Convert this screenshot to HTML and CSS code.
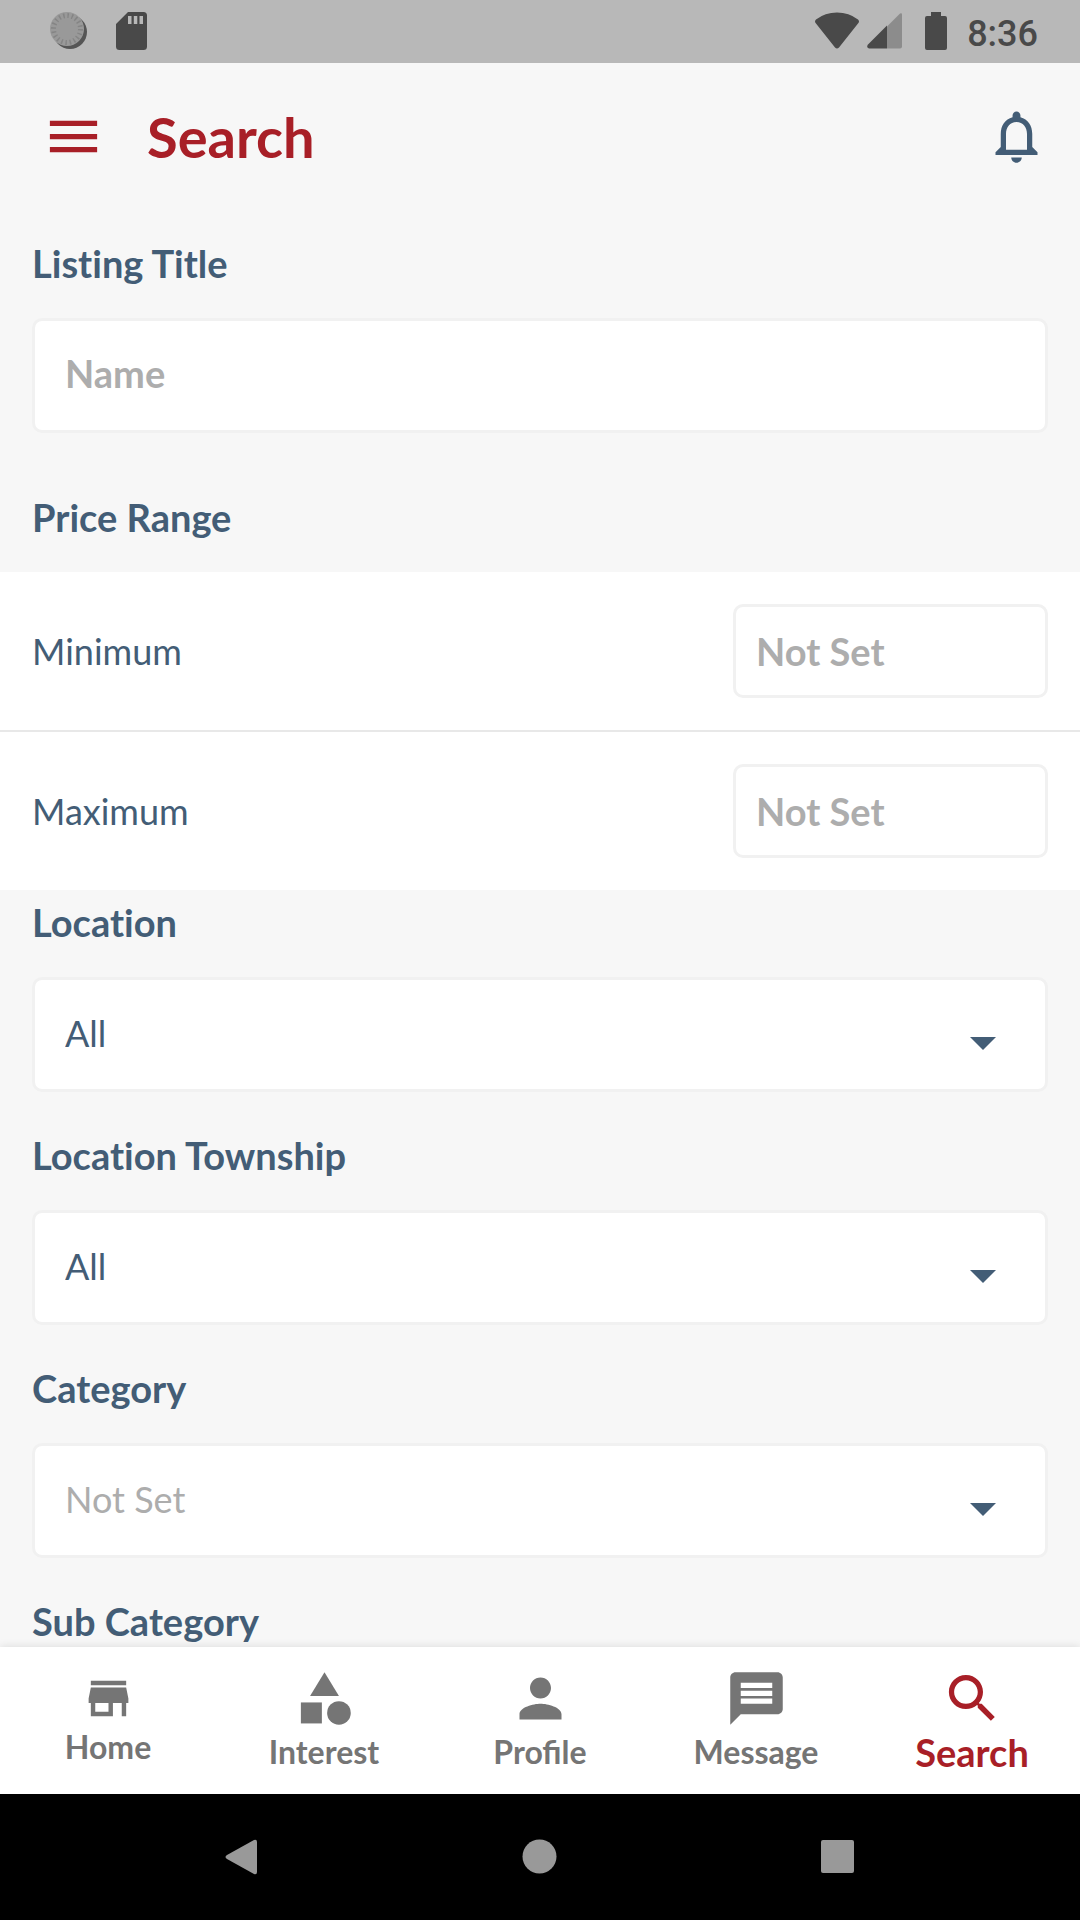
FILE: index.html
```html
<!DOCTYPE html>
<html lang="en">
<head>
<meta charset="utf-8">
<meta name="viewport" content="width=device-width, initial-scale=1">
<title>Search</title>
<link rel="stylesheet" href="styles.css">
</head>
<body>
<div class="app">
  <div class="status-bar">
    <div class="status-left">
      <svg class="status-sync" viewBox="0 0 38 38" aria-hidden="true">
        <circle cx="20" cy="20" r="17" fill="#555"/>
        <circle cx="17" cy="17" r="17" fill="#999"/>
        <circle cx="17" cy="17" r="13.500" fill="none" stroke="#858585" stroke-width="5" stroke-dasharray="1.500 2.740"/>
      </svg>
      <svg class="status-sd" viewBox="0 0 31 38" aria-hidden="true">
        <path fill="#494949" fill-rule="evenodd" d="M12 0h15.500Q31 0 31 3.500v31Q31 38 27.500 38h-24Q0 38 0 34.500V12zM12 4v8h3.500V4zm5.800 0v8h3.500V4zm5.700 0v8H27V4z"/>
      </svg>
    </div>
    <div class="status-right">
      <svg class="status-wifi" viewBox="0 0 44 37" aria-hidden="true">
        <path fill="#494949" d="M1 7Q10 0 22 0t21 7q2 2 0 4L24 35q-2 2-4 0L1 11q-2-2 0-4z"/>
      </svg>
      <svg class="status-signal" viewBox="0 0 35 37" aria-hidden="true">
        <path fill="#8c8c8c" d="M20 14 33 1q2-1 2 1v32q0 2-2 2H20z"/>
        <path fill="#494949" d="M20 13v23H2q-3-1-1-4z"/>
      </svg>
      <svg class="status-battery" viewBox="0 0 22 38" aria-hidden="true">
        <path fill="#494949" d="M6 0h10v4h4q2 0 2 2v30q0 2-2 2H2q-2 0-2-2V6q0-2 2-2h4z"/>
      </svg>
      <span class="clock">8:36</span>
    </div>
  </div>

  <header class="app-bar">
    <button class="icon-button" type="button" aria-label="Menu">
      <svg class="icon" viewBox="0 0 24 24"><path d="M3 18h18v-2H3v2zm0-5h18v-2H3v2zm0-7v2h18V6H3z"/></svg>
    </button>
    <h1 class="app-title">Search</h1>
    <button class="icon-button alerts" type="button" aria-label="Notifications">
      <svg class="icon" viewBox="0 0 24 24"><path d="M12 22c1.100 0 2-.9 2-2h-4c0 1.100.9 2 2 2zm6-6v-5c0-3.070-1.630-5.640-4.500-6.320V4c0-.83-.67-1.500-1.500-1.500s-1.500.67-1.500 1.500v.68C7.640 5.360 6 7.920 6 11v5l-2 2v1h16v-1l-2-2zm-2 1H8v-6c0-2.480 1.510-4.500 4-4.500s4 2.020 4 4.500v6z"/></svg>
    </button>
  </header>

  <main class="content">
    <form class="search-form">
      <div class="field field-first">
        <label class="field-label" for="listing-title">Listing Title</label>
        <input class="control" id="listing-title" type="text" placeholder="Name">
      </div>

      <fieldset class="price">
        <legend class="field-label price-title">Price Range</legend>
        <div class="price-row">
          <label class="price-label" for="price-min">Minimum</label>
          <input class="control price-input" id="price-min" type="text" inputmode="numeric" placeholder="Not Set">
        </div>
        <div class="price-row">
          <label class="price-label" for="price-max">Maximum</label>
          <input class="control price-input" id="price-max" type="text" inputmode="numeric" placeholder="Not Set">
        </div>
      </fieldset>

      <div class="field">
        <label class="field-label" for="location">Location</label>
        <div class="select-box">
          <select class="control" id="location"><option>All</option></select>
        </div>
      </div>
      <div class="field">
        <label class="field-label" for="township">Location Township</label>
        <div class="select-box">
          <select class="control" id="township"><option>All</option></select>
        </div>
      </div>
      <div class="field">
        <label class="field-label" for="category">Category</label>
        <div class="select-box">
          <select class="control unset" id="category"><option>Not Set</option></select>
        </div>
      </div>
      <div class="field">
        <label class="field-label" for="sub-category">Sub Category</label>
        <div class="select-box">
          <select class="control unset" id="sub-category"><option>Not Set</option></select>
        </div>
      </div>
    </form>
  </main>

  <nav class="tabs" aria-label="Main">
    <a class="tab" href="#home">
      <svg class="icon icon-small" viewBox="0 0 24 24" aria-hidden="true"><path d="M20 4H4v2h16V4zm1 10v-2l-1-5H4l-1 5v2h1v6h10v-6h4v6h2v-6h1zm-9 4H6v-4h6v4z"/></svg>
      <span>Home</span>
    </a>
    <a class="tab" href="#interest">
      <svg class="icon" viewBox="0 0 24 24" aria-hidden="true"><path d="M12 2l-5.500 9h11z"/><circle cx="17.500" cy="17.500" r="4.500"/><path d="M3 13.500h8v8H3z"/></svg>
      <span>Interest</span>
    </a>
    <a class="tab" href="#profile">
      <svg class="icon" viewBox="0 0 24 24" aria-hidden="true"><path d="M12 12c2.210 0 4-1.790 4-4s-1.790-4-4-4-4 1.790-4 4 1.790 4 4 4zm0 2c-2.670 0-8 1.340-8 4v2h16v-2c0-2.660-5.330-4-8-4z"/></svg>
      <span>Profile</span>
    </a>
    <a class="tab" href="#message">
      <svg class="icon" viewBox="0 0 24 24" aria-hidden="true"><path fill-rule="evenodd" d="M20 2H4c-1.100 0-2 .9-2 2v18l4-4h14c1.100 0 2-.9 2-2V4c0-1.100-.9-2-2-2zM6 6h12v2H6zm0 3h12v2H6zm0 3h12v2H6z"/></svg>
      <span>Message</span>
    </a>
    <a class="tab tab-active" href="#search" aria-current="page">
      <svg class="icon" viewBox="0 0 24 24" aria-hidden="true"><path d="M15.500 14h-.79l-.28-.27C15.410 12.590 16 11.110 16 9.500 16 5.910 13.090 3 9.500 3S3 5.910 3 9.500 5.910 16 9.500 16c1.610 0 3.090-.59 4.230-1.570l.27.28v.79l5 4.990L20.490 19l-4.990-5zm-6 0C7.010 14 5 11.990 5 9.500S7.010 5 9.500 5 14 7.010 14 9.500 11.990 14 9.500 14z"/></svg>
      <span>Search</span>
    </a>
  </nav>

  <div class="system-nav">
    <button class="system-button" type="button" aria-label="Back">
      <svg class="system-icon" viewBox="0 0 36 36"><path d="M3 16 30 1q3-1 3 2v30q0 3-3 2L3 20q-3-2 0-4z"/></svg>
    </button>
    <button class="system-button" type="button" aria-label="Home">
      <svg class="system-icon" viewBox="0 0 36 36"><circle cx="17.500" cy="17.500" r="17"/></svg>
    </button>
    <button class="system-button" type="button" aria-label="Recent apps">
      <svg class="system-icon" viewBox="0 0 36 36"><rect x="1" y="1" width="33" height="33" rx="2"/></svg>
    </button>
  </div>
</div>
</body>
</html>
```
FILE: styles.css
```css
:root {
  --ink: #435d76;
  --accent: #a81f27;
  --muted: #adadad;
  --surface: #f7f7f7;
  --line: #f1f1f1;
}

* {
  box-sizing: border-box;
}

body {
  margin: 0;
  background: var(--surface);
  color: var(--ink);
  font-family: Lato, "Liberation Sans", sans-serif;
  font-size: 36px;
}

button {
  padding: 0;
  border: 0;
  background: none;
  color: inherit;
}

.app {
  display: flex;
  flex-direction: column;
  height: 100vh;
}

/* Device status bar */
.status-bar {
  display: flex;
  justify-content: space-between;
  flex: none;
  height: 63px;
  padding: 12px 42px 0 50px;
  background: #b8b8b8;
}

.status-left,
.status-right {
  display: flex;
  align-items: flex-start;
}

.status-left {
  gap: 28px;
}

.status-sync {
  width: 38px;
  height: 38px;
}

.status-sd {
  width: 31px;
  height: 38px;
}

.status-wifi {
  width: 44px;
  height: 38px;
  margin-right: 8px;
}

.status-signal {
  width: 35px;
  height: 38px;
  margin-right: 23px;
}

.status-battery {
  width: 22px;
  height: 38px;
  margin-right: 20px;
}

.clock {
  color: #494949;
  font-family: Roboto, sans-serif;
  font-weight: 500;
  line-height: 44px;
}

/* Header */
.app-bar {
  display: flex;
  align-items: center;
  flex: none;
  height: 147px;
  padding: 0 32px 0 42px;
  color: var(--accent);
}

.icon-button,
.icon {
  display: block;
  width: 63px;
  height: 63px;
}

.icon {
  fill: currentColor;
}

.icon-small {
  width: 53px;
  height: 53px;
}

.app-title {
  flex: 1;
  margin: 0 0 0 42px;
  font-size: 56px;
  font-weight: 700;
  line-height: 64px;
}

.alerts {
  color: var(--ink);
}

/* Search form */
.content {
  flex: 1;
  min-height: 0;
  overflow-y: auto;
  scrollbar-width: none;
}

.search-form {
  padding-top: 26px;
}

.field {
  display: flex;
  flex-direction: column;
  gap: 28px;
  padding: 0 32px 36px;
}

.field-label {
  font-size: 38px;
  font-weight: 700;
  font-variant-ligatures: no-common-ligatures;
  line-height: 54px;
}

.control {
  display: block;
  width: 100%;
  height: 115px;
  margin: 0;
  padding: 0 32px 4px 30px;
  border: 3px solid var(--line);
  border-radius: 10px;
  background: #fff;
  color: var(--ink);
  font: inherit;
  appearance: none;
}

input.control {
  padding-bottom: 6px;
  font-size: 38px;
  font-weight: 700;
}

.control::placeholder {
  color: var(--muted);
  opacity: 1;
}

.control.unset {
  color: var(--muted);
}

.field-first {
  padding-bottom: 57px;
}

.select-box {
  position: relative;
}

.select-box::after {
  content: "";
  position: absolute;
  top: 60px;
  right: 52px;
  border: 13px solid transparent;
  border-top-color: var(--ink);
  border-bottom-width: 0;
  pointer-events: none;
}

.price {
  min-width: 0;
  margin: 0 0 5px;
  padding: 0;
  border: 0;
}

.price-title {
  padding: 0 32px 28px;
}

.price-row {
  display: flex;
  align-items: center;
  justify-content: space-between;
  padding: 32px;
  background: #fff;
}

.price-row + .price-row {
  border-top: 2px solid #e8e8e8;
}

input.price-input {
  width: 315px;
  height: 94px;
  padding: 0 20px;
}

/* Bottom navigation */
.tabs {
  position: relative;
  display: grid;
  grid-template-columns: repeat(5, 1fr);
  flex: none;
  height: 147px;
  background: #fff;
  box-shadow: 0 -1px 8px rgba(0, 0, 0, 0.1);
}

.tab {
  display: flex;
  flex-direction: column;
  align-items: center;
  justify-content: center;
  color: #757575;
  font-size: 32px;
  font-weight: 700;
  line-height: 44px;
  text-decoration: none;
}

.tab-active {
  color: var(--accent);
  font-size: 38px;
}

/* Device navigation */
.system-nav {
  display: grid;
  grid-template-columns: repeat(3, 1fr);
  flex: none;
  height: 126px;
  padding: 0 93px;
  background: #000;
}

.system-button {
  display: flex;
  align-items: center;
  justify-content: center;
}

.system-icon {
  width: 36px;
  height: 36px;
  fill: #999;
}
```
